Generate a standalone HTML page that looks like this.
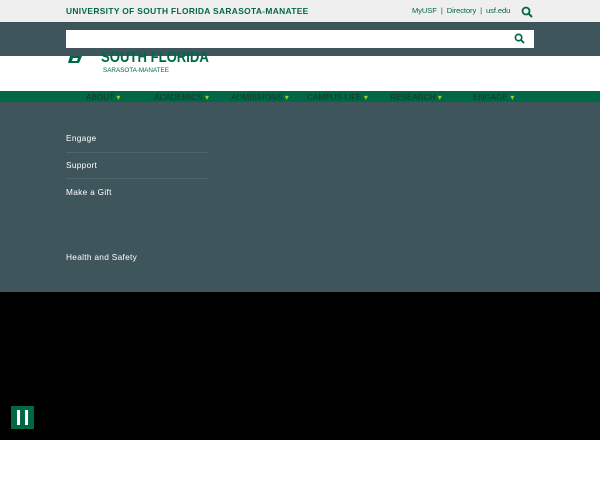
<!DOCTYPE html>
<html><head><style>
*{margin:0;padding:0;box-sizing:border-box}
body{width:600px;height:480px;overflow:hidden;font-family:"Liberation Sans",sans-serif;background:#fff;position:relative}
.a{position:absolute}
</style></head><body>
<div class="a" style="left:0;top:0;width:600px;height:22px;background:#efefef"></div>
<div class="a" style="left:66px;top:6px;font-size:8.4px;font-weight:bold;color:#006747;letter-spacing:0.35px">UNIVERSITY OF SOUTH FLORIDA SARASOTA-MANATEE</div>
<div class="a" style="left:412px;top:6px;font-size:7.6px;color:#006747;white-space:nowrap;letter-spacing:-0.1px">MyUSF<span style="margin:0 4px">|</span>Directory<span style="margin:0 4px">|</span>usf.edu</div>
<svg class="a" style="left:521px;top:6px" width="12" height="12" viewBox="0 0 12 12"><circle cx="5" cy="5" r="3.5" fill="none" stroke="#006747" stroke-width="1.8"/><line x1="7.5" y1="7.5" x2="11" y2="11" stroke="#006747" stroke-width="2"/></svg>
<div class="a" style="left:0;top:22px;width:600px;height:34px;background:#3f555c"></div>
<div class="a" style="left:66px;top:30px;width:468px;height:18px;background:#fff"></div>
<svg class="a" style="left:514px;top:33px" width="11" height="11" viewBox="0 0 12 12"><circle cx="5" cy="5" r="3.5" fill="none" stroke="#006747" stroke-width="1.8"/><line x1="7.5" y1="7.5" x2="11" y2="11" stroke="#006747" stroke-width="2"/></svg>
<svg class="a" style="left:68px;top:56px" width="16" height="8" viewBox="0 0 16 8"><path d="M2 0 L14 0 L11 7 L0 7 Z M5 2 L10 2 L9 5 L4 5Z" fill="#006747" fill-rule="evenodd"/></svg>
<div class="a" style="left:101px;top:52px;width:120px;height:15px;overflow:hidden"><div style="position:absolute;top:-3px;font-size:16px;font-weight:bold;color:#006747;transform:scaleX(0.82);transform-origin:left;white-space:nowrap">SOUTH FLORIDA</div></div>
<div class="a" style="left:103px;top:67px;font-size:6.3px;color:#006747">SARASOTA-MANATEE</div>
<div class="a" style="left:0;top:91px;width:600px;height:11px;background:#006747"></div>
<div class="a" style="top:92px;left:0;width:600px;font-size:8.2px;color:#183228;white-space:nowrap">
<span class="a" style="left:86px">ABOUT <span style="color:#9c3">▾</span></span>
<span class="a" style="left:154px">ACADEMICS <span style="color:#9c3">▾</span></span>
<span class="a" style="left:231px">ADMISSIONS <span style="color:#9c3">▾</span></span>
<span class="a" style="left:307px">CAMPUS LIFE <span style="color:#9c3">▾</span></span>
<span class="a" style="left:390px">RESEARCH <span style="color:#9c3">▾</span></span>
<span class="a" style="left:473px">ENGAGE <span style="color:#9c3">▾</span></span>
</div>
<div class="a" style="left:0;top:102px;width:600px;height:190px;background:#3f555c"></div>
<div class="a" style="left:66px;top:133px;font-size:8.3px;color:#fff;letter-spacing:0.3px">Engage</div>
<div class="a" style="left:66px;top:152px;width:142px;height:1px;background:#4f656c"></div>
<div class="a" style="left:66px;top:160px;font-size:8.3px;color:#fff;letter-spacing:0.3px">Support</div>
<div class="a" style="left:66px;top:178px;width:142px;height:1px;background:#4f656c"></div>
<div class="a" style="left:66px;top:187px;font-size:8.3px;color:#fff;letter-spacing:0.3px">Make a Gift</div>
<div class="a" style="left:66px;top:252px;font-size:8.3px;color:#fff;letter-spacing:0.3px">Health and Safety</div>
<div class="a" style="left:0;top:292px;width:600px;height:148px;background:#000"></div>
<div class="a" style="left:11px;top:406px;width:23px;height:23px;background:#006747"></div>
<div class="a" style="left:17px;top:410px;width:3px;height:15px;background:#fff"></div>
<div class="a" style="left:25px;top:410px;width:3px;height:15px;background:#fff"></div>
</body></html>
